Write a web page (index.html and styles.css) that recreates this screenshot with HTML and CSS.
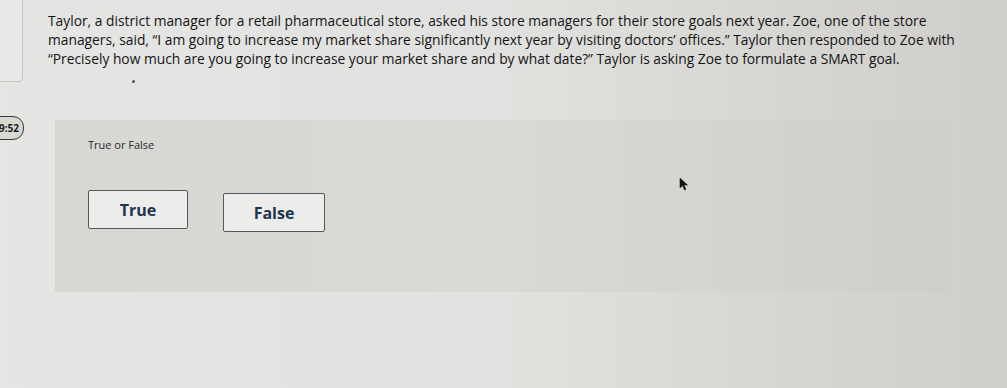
FILE: index.html
```html
<!DOCTYPE html>
<html>
<head>
<meta charset="utf-8">
<link rel="stylesheet" href="styles.css">
</head>
<body>
<div class="page">
  <div class="side-card"></div>
  <div class="timer">9:52</div>
  <p class="question">Taylor, a district manager for a retail pharmaceutical store, asked his store managers for their store goals next year. Zoe, one of the store managers, said, “I am going to increase my market share significantly next year by visiting doctors’ offices.” Taylor then responded to Zoe with “Precisely how much are you going to increase your market share and by what date?” Taylor is asking Zoe to formulate a SMART goal.</p>
  <span class="dot"></span>
  <section class="panel">
    <div class="label">True or False</div>
    <div class="choices">
      <button class="choice">True</button>
      <button class="choice choice-false">False</button>
    </div>
    <svg class="cursor" width="10" height="14" viewBox="0 0 10 14"><path d="M1 1 L1 11 L3.5 8.5 L5.5 13 L7 12.3 L5 8 L8.5 8 Z" fill="#111" stroke="#222" stroke-width="0.6"/></svg>
  </section>
</div>
</body>
</html>
```
FILE: styles.css
```css
html, body {
  margin: 0;
  padding: 0;
}
body {
  width: 1007px;
  height: 388px;
  overflow: hidden;
  background: linear-gradient(90deg, #e5e5e3 0%, #e1e1df 50%, #d4d3cf 85%, #cfceca 100%);
  font-family: "Open Sans", "Lato", sans-serif;
  color: #1c1c1c;
}
.page {
  position: relative;
  width: 1007px;
  height: 388px;
}
.side-card {
  position: absolute;
  left: -10px;
  top: -10px;
  width: 31px;
  height: 90px;
  border: 1px solid #c6c6c3;
  border-radius: 4px;
  background: #e9e9e7;
}
.timer {
  position: absolute;
  left: -14px;
  top: 116px;
  width: 32px;
  height: 22px;
  border: 1.5px solid #3a3a36;
  border-radius: 11px;
  background: #d8d8d2;
  font-size: 10px;
  font-weight: 700;
  line-height: 22px;
  text-align: right;
  padding-right: 4px;
  box-sizing: content-box;
}
.question {
  margin: 0;
  padding: 11px 0 0 48px;
  width: 920px;
  height: 57px;
  font-size: 13.8px;
  line-height: 19px;
  font-weight: 500;
  color: #141414;
}
.dot {
  position: absolute;
  left: 132px;
  top: 80px;
  width: 3px;
  height: 3px;
  border-radius: 50%;
  background: #555;
}
.panel {
  position: relative;
  margin: 52px 0 0 55px;
  width: 895px;
  height: 172px;
  background: linear-gradient(90deg, #d7d7d4 0%, #d9d9d6 50%, #cfcec9 100%);
  padding: 17px 0 0 33px;
  box-sizing: border-box;
}
.label {
  font-size: 11px;
  color: #2a2a2a;
}
.choices {
  display: flex;
  gap: 35px;
  margin-top: 38px;
  align-items: flex-start;
}
.choice {
  width: 100px;
  height: 39px;
  border: 1px solid #55585a;
  border-radius: 2px;
  background: #ececea;
  font-family: "Open Sans", "Lato", sans-serif;
  font-size: 16px;
  font-weight: 700;
  color: #1e3550;
  padding: 0;
}
.choice-false {
  margin-top: 3px;
  width: 102px;
}
.cursor {
  position: absolute;
  left: 624px;
  top: 57px;
}
```
